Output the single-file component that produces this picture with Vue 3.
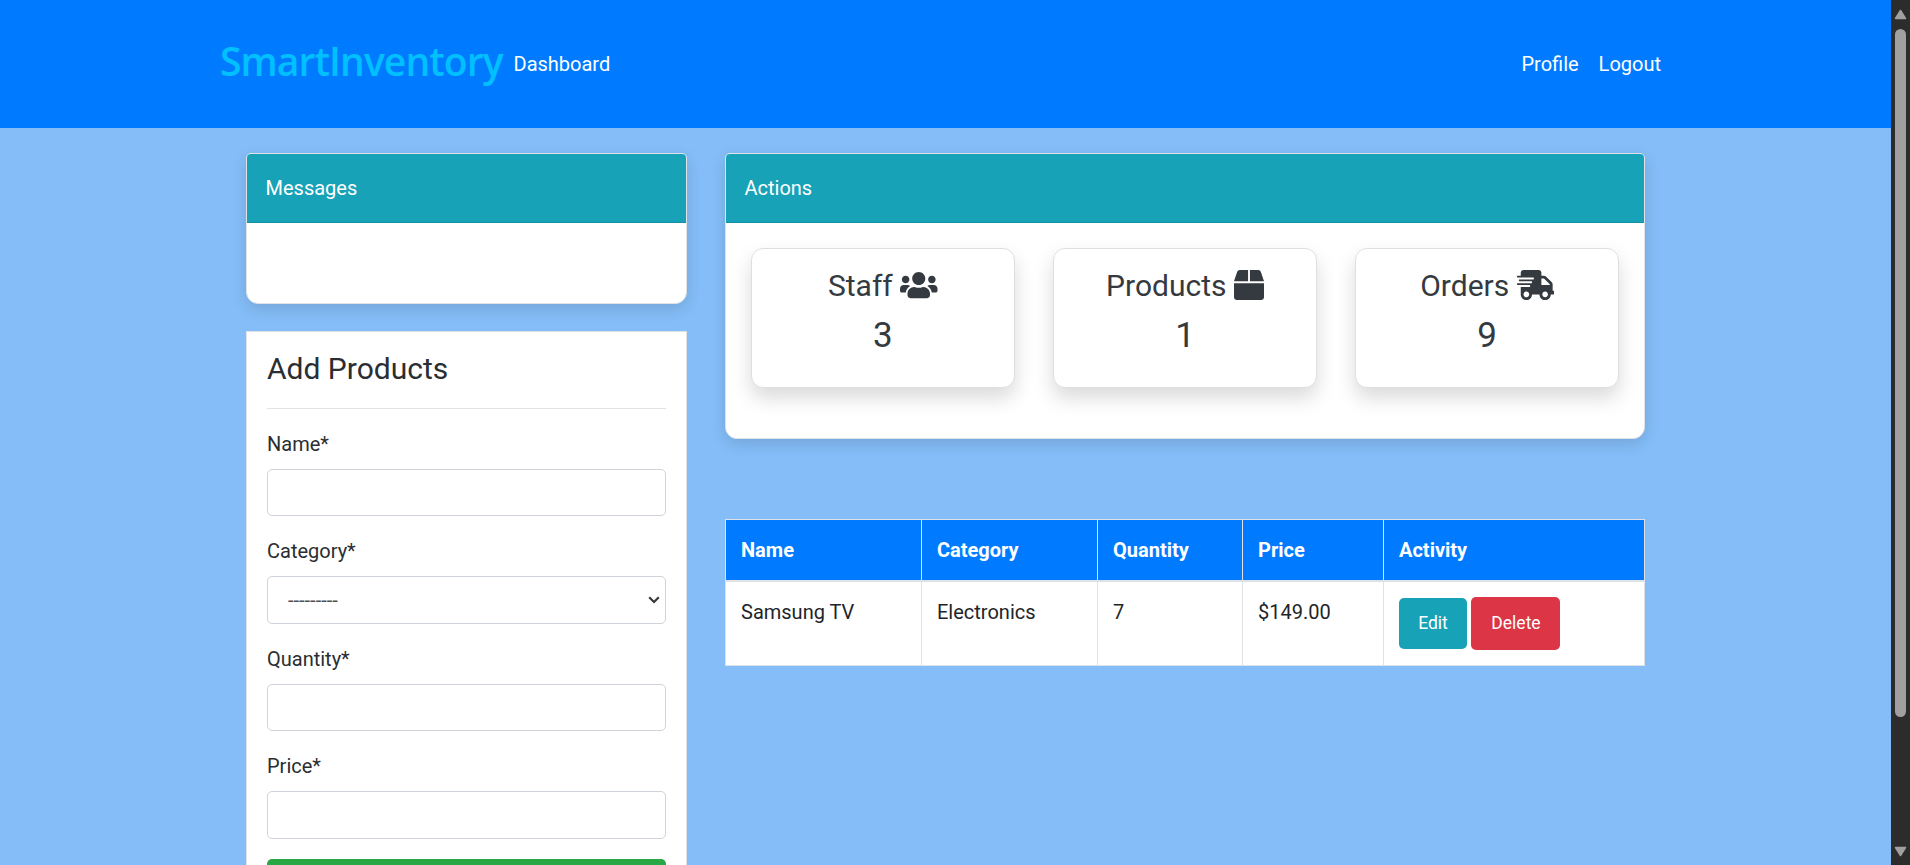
<script setup>
const stats = [
  {
    label: 'Staff', value: 3, box: '0 0 640 512', wide: true,
    path: 'M96 224c35.3 0 64-28.7 64-64s-28.7-64-64-64-64 28.7-64 64 28.7 64 64 64zm448 0c35.3 0 64-28.7 64-64s-28.7-64-64-64-64 28.7-64 64 28.7 64 64 64zm32 32h-64c-17.6 0-33.5 7.1-45.1 18.6 40.3 22.1 68.9 62 75.1 109.4h66c17.7 0 32-14.3 32-32v-32c0-35.3-28.7-64-64-64zm-256 0c61.9 0 112-50.1 112-112S381.9 32 320 32 208 82.1 208 144s50.1 112 112 112zm76.8 32h-8.3c-20.8 10-43.9 16-68.5 16s-47.6-6-68.5-16h-8.3C179.6 288 128 339.6 128 403.2V432c0 26.5 21.5 48 48 48h288c26.5 0 48-21.5 48-48v-28.8c0-63.6-51.6-115.2-115.2-115.2zm-223.7-13.4C161.5 263.1 145.6 256 128 256H64c-35.3 0-64 28.7-64 64v32c0 17.7 14.3 32 32 32h65.9c6.3-47.4 34.9-87.3 75.2-109.4z'
  },
  {
    label: 'Products', value: 1, box: '0 0 512 512', wide: false,
    path: 'M509.5 184.6L458.9 32.8C452.4 13.2 434.1 0 413.4 0H272v192h238.7c-.4-2.5-.4-5-1.2-7.4zM240 0H98.6c-20.7 0-39 13.2-45.5 32.8L2.5 184.6c-.8 2.4-.8 4.9-1.2 7.4H240V0zM0 224v240c0 26.5 21.5 48 48 48h416c26.5 0 48-21.5 48-48V224H0z'
  },
  {
    label: 'Orders', value: 9, box: '0 0 640 512', wide: true,
    path: 'M624 352h-16V243.9c0-12.7-5.1-24.9-14.1-33.9L494 110.1c-9-9-21.2-14.1-33.9-14.1H416V48c0-26.5-21.5-48-48-48H112C85.5 0 64 21.5 64 48v48H8c-4.4 0-8 3.6-8 8v16c0 4.4 3.6 8 8 8h272c4.4 0 8 3.6 8 8v16c0 4.4-3.6 8-8 8H40c-4.4 0-8 3.6-8 8v16c0 4.4 3.6 8 8 8h208c4.4 0 8 3.6 8 8v16c0 4.4-3.6 8-8 8H8c-4.4 0-8 3.6-8 8v16c0 4.4 3.6 8 8 8h208c4.4 0 8 3.6 8 8v16c0 4.4-3.6 8-8 8H64v128c0 53 43 96 96 96s96-43 96-96h128c0 53 43 96 96 96s96-43 96-96h48c8.8 0 16-7.2 16-16v-32c0-8.8-7.2-16-16-16zM160 464c-26.5 0-48-21.5-48-48s21.5-48 48-48 48 21.5 48 48-21.5 48-48 48zm320 0c-26.5 0-48-21.5-48-48s21.5-48 48-48 48 21.5 48 48-21.5 48-48 48zm80-208H416V144h44.1l99.9 99.9V256z'
  }
]
const columns = ['Name', 'Category', 'Quantity', 'Price', 'Activity']
const products = [['Samsung TV', 'Electronics', '7', '$149.00']]
</script>

<template>
  <div class="window">
    <div class="page">
      <nav class="navbar">
        <a class="brand">SmartInventory</a>
        <a class="link">Dashboard</a>
        <div class="account">
          <a class="link">Profile</a>
          <a class="link">Logout</a>
        </div>
      </nav>
      <main class="content">
        <aside class="side">
          <section class="card messages">
            <header class="card-header">Messages</header>
          </section>
          <form class="form">
            <h4>Add Products</h4>
            <hr />
            <div class="group"><label>Name*</label><input class="control" /></div>
            <div class="group">
              <label>Category*</label>
              <div class="control select">
                <span>---------</span>
                <svg class="caret" viewBox="0 0 12 8"><path d="M1.2 1.2 6 6l4.8-4.8" /></svg>
              </div>
            </div>
            <div class="group"><label>Quantity*</label><input class="control" /></div>
            <div class="group"><label>Price*</label><input class="control" /></div>
            <div class="submit"></div>
          </form>
        </aside>
        <div class="main">
          <section class="card actions">
            <header class="card-header">Actions</header>
            <div class="stats">
              <div v-for="s in stats" :key="s.label" class="stat">
                <h4>{{ s.label }} <svg class="icon" :class="{ wide: s.wide }" :viewBox="s.box"><path :d="s.path" /></svg></h4>
                <h3>{{ s.value }}</h3>
              </div>
            </div>
          </section>
          <table class="table">
            <colgroup><col class="c1" /><col class="c2" /><col class="c3" /><col class="c4" /><col /></colgroup>
            <thead><tr><th v-for="c in columns" :key="c">{{ c }}</th></tr></thead>
            <tbody>
              <tr v-for="p in products" :key="p[0]">
                <td v-for="v in p" :key="v">{{ v }}</td>
                <td><div class="buttons"><a class="btn edit">Edit</a><a class="btn delete">Delete</a></div></td>
              </tr>
            </tbody>
          </table>
        </div>
      </main>
    </div>
    <div class="scrollbar">
      <svg class="arrow" viewBox="0 0 13 11"><path d="M6.5 1.5 11.5 9.5H1.5z" /></svg>
      <div class="thumb"></div>
      <svg class="arrow" viewBox="0 0 13 11"><path d="M6.5 9.5 11.5 1.5H1.5z" /></svg>
    </div>
  </div>
</template>

<style>
body { margin: 0; overflow: hidden; }
</style>

<style scoped>
* { box-sizing: border-box; }
.window {
  display: flex;
  width: 1910px;
  height: 865px;
  overflow: hidden;
  font: 400 20px/30px Roboto, sans-serif;
  color: #212529;
}
.page { width: 1891px; height: 865px; overflow: hidden; background: #84bdf7; }
.navbar { display: flex; align-items: center; height: 128px; padding: 0 230px 0 220px; background: #007bff; color: #fff; }
.brand { width: 293.5px; font: 600 39px/60px "Open Sans", sans-serif; letter-spacing: -.9px; color: #00c0ff; white-space: nowrap; padding-bottom: 7px; }
.account { display: flex; gap: 20px; margin-left: auto; }
.content { display: flex; align-items: flex-start; gap: 38px; padding: 25px 246px 0; }
.side { width: 441px; }
.main { width: 920px; }
.card { border: 1px solid #dfe3e8; border-radius: 5px 5px 12px 12px; background: #fff; box-shadow: 0 5px 15px rgba(0, 0, 0, .12); }
.card-header { height: 69px; padding: 19px 18.5px; border-radius: 4px 4px 0 0; border-bottom: 1px solid #148ea1; background: #17a2b8; color: #fff; }
.messages { height: 151px; }
.form { height: 600px; margin-top: 27px; padding: 19px 20px; border: 1px solid #dfe3e8; background: #fff; }
h3, h4 { margin: 0; font-weight: 400; }
h4 { font-size: 30px; line-height: 36px; }
h3 { font-size: 35px; line-height: 42px; }
.form hr { height: 1px; margin: 20.5px 0 20px; border: 0; background: #e2e2e2; }
.group { margin-bottom: 20px; }
.group label { display: block; margin-bottom: 10px; }
.control { display: flex; width: 100%; height: 47.5px; border: 1px solid #ced4da; border-radius: 5px; background: #fff; }
.form h4, .group label { color: #2a2e32; }
.select { align-items: center; justify-content: space-between; padding: 0 5px 0 20px; color: #495057; font-size: 20px; }
.caret { width: 12px; height: 8px; fill: none; stroke: #343a40; stroke-width: 2.2; }
.submit { height: 48px; border-radius: 5px; background: #28a745; }
.actions { height: 286px; }
.stats { display: flex; gap: 38.5px; padding: 25px 25px; }
.stat { flex: 1; height: 140px; padding-top: 19px; border: 1px solid #dfdfdf; border-radius: 12px; text-align: center; color: #343a40; background: #fff; box-shadow: 0 10px 20px rgba(0, 0, 0, .15); }
.stat h4 { margin-bottom: 11px; }
.icon { width: 30px; height: 30px; vertical-align: -3.75px; fill: currentColor; }
.icon.wide { width: 37.5px; }
.table { width: 920px; margin-top: 80px; border-collapse: collapse; table-layout: fixed; background: #fff; }
.c1 { width: 196px; }
.c2 { width: 176px; }
.c3 { width: 145px; }
.c4 { width: 141px; }
th, td { padding: 15px 15px; border: 1px solid #dee2e6; text-align: left; vertical-align: top; }
th { height: 61px; padding-bottom: 14px; border-bottom-width: 2px; background: #007bff; color: #fff; font-weight: 700; }
td { height: 84px; }
.buttons { display: flex; align-items: center; gap: 4px; }
.btn { display: flex; align-items: center; justify-content: center; height: 51px; width: 68px; border-radius: 5px; background: #17a2b8; color: #fff; font-size: 17.5px; }
.delete { width: 89px; height: 53px; padding-left: 1px; background: #dc3545; }
.scrollbar { display: flex; flex-direction: column; align-items: center; width: 19px; height: 865px; padding: 9px 0 8px; background: #2c2c2c; }
.arrow { width: 13px; height: 11px; fill: #a0a0a0; stroke: #a0a0a0; stroke-width: 1.5; stroke-linejoin: round; }
.thumb { width: 11px; height: 688px; margin: 9px 0 auto; border-radius: 6px; background: #a0a0a0; }
</style>
